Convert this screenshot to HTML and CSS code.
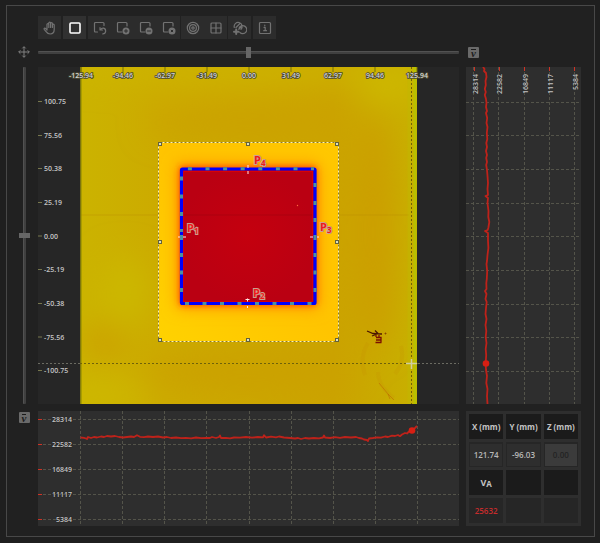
FILE: index.html
```html
<!DOCTYPE html>
<html lang="en">
<head>
<meta charset="utf-8">
<title>Scan viewer</title>
<link rel="stylesheet" href="styles.css">
</head>
<body>
<main class="panel">
  <div class="toolbar" role="toolbar" aria-label="Tools">
    <div class="group single">
      <button class="tool" aria-label="Pan"><svg class="icon" viewBox="0 0 14 14"><path d="M4 9V3.500a.9.9 0 0 1 1.800 0V6.500V2a.9.9 0 0 1 1.800 0v4.500V2.500a.9.9 0 0 1 1.800 0v4V4a.9.9 0 0 1 1.800 0v4.600c0 2.800-1.700 4.400-4 4.400-2.200 0-3.100-.9-4.100-2.400L1.200 8.300c-.5-.9.6-1.600 1.300-.9L4 9"/></svg></button>
    </div>
    <div class="group single">
      <button class="tool active" aria-label="Rectangle"><svg class="icon" viewBox="0 0 14 14"><rect x="2" y="2" width="10" height="10" rx="1"/></svg></button>
    </div>
    <div class="group">
      <button class="tool" aria-label="Reset region"><svg class="icon" viewBox="0 0 14 14"><path d="M4.500 11H2.500q-1 0-1-1V2.500q0-1 1-1H10q1 0 1 1V4.500M7 6.500v2.500h2.500M7.300 8.800Q8.500 7 10.500 7.200a2.900 2.900 0 0 1-.7 5.700"/></svg></button>
      <button class="tool" aria-label="Add region"><svg class="icon" viewBox="0 0 14 14"><path d="M6 11H2.500q-1 0-1-1V2.500q0-1 1-1H10q1 0 1 1V5"/><circle class="disc" cx="10" cy="10" r="3.500"/><path class="cut" d="M8.500 10h3M10 8.500v3"/></svg></button>
      <button class="tool" aria-label="Subtract region"><svg class="icon" viewBox="0 0 14 14"><path d="M6 11H2.500q-1 0-1-1V2.500q0-1 1-1H10q1 0 1 1V5"/><circle class="disc" cx="10" cy="10" r="3.500"/><path class="cut" d="M8.500 10h3"/></svg></button>
      <button class="tool" aria-label="Delete region"><svg class="icon" viewBox="0 0 14 14"><path d="M6 11H2.500q-1 0-1-1V2.500q0-1 1-1H10q1 0 1 1V5"/><circle class="disc" cx="10" cy="10" r="3.500"/><path class="cut" d="M9.200 9.200l1.600 1.600M10.800 9.200l-1.600 1.600"/></svg></button>
    </div>
    <div class="group">
      <button class="tool" aria-label="Target"><svg class="icon" viewBox="0 0 14 14"><circle cx="7" cy="7" r="5.700"/><circle cx="7" cy="7" r="3.400"/><circle cx="7" cy="7" r="1.200"/></svg></button>
      <button class="tool" aria-label="Grid"><svg class="icon" viewBox="0 0 14 14"><rect x="2" y="2" width="10" height="10" rx="1"/><path d="M7 2v10M2 7h10"/></svg></button>
    </div>
    <div class="group single">
      <button class="tool" aria-label="Combine"><svg class="icon" viewBox="0 0 14 14"><path d="M1.300 6.500A4 4 0 1 1 8 8.300M6.800 11.300a4 4 0 1 0-.8-4M3 6.500L6.500 3M5.800 8.300L9 5"/><path class="bold" d="M3.200 8.500v4.500M1 10.700h4.500"/></svg></button>
    </div>
    <div class="group single">
      <button class="tool" aria-label="Information"><svg class="icon" viewBox="0 0 14 14"><rect x="1.500" y="1.500" width="11" height="11" rx="1"/><path d="M6 6.300h1.200v3.200M5.700 9.700h2.800M6.800 4v.7"/></svg></button>
    </div>
  </div>

  <div class="workspace">
    <svg class="move" viewBox="0 0 12 12" aria-hidden="true"><path d="M6 .8v10.400M.8 6h10.400M4.300 2.400L6 .7l1.700 1.700M4.300 9.600L6 11.300l1.700-1.700M2.400 4.300L.7 6l1.700 1.700M9.600 4.300L11.300 6 9.600 7.700"/></svg>
    <input class="slider" type="range" aria-label="Horizontal position" value="50">
    <button class="average side" aria-label="Column average"><span>v</span></button>

    <input class="slider vertical" type="range" aria-label="Vertical position" value="50">

    <svg class="map" viewBox="0 0 421 337" role="img" aria-label="Scan map">
      <defs>
        <linearGradient id="base" x1="0" y1="0" x2="1" y2="0">
          <stop offset="0" stop-color="#cbb300"/><stop offset=".25" stop-color="#ccaa00"/><stop offset=".75" stop-color="#cba300"/><stop offset="1" stop-color="#c8b000"/>
        </linearGradient>
        <radialGradient id="core"><stop offset="0" stop-color="#c4000e"/><stop offset="1" stop-color="#ba0012"/></radialGradient>
        <linearGradient id="warm" x1="0" y1="1" x2="1" y2="0">
          <stop offset="0" stop-color="#ffd200"/><stop offset=".5" stop-color="#ffc400"/><stop offset="1" stop-color="#ffc800"/>
        </linearGradient>
        <filter id="soft" x="-100%" y="-200%" width="300%" height="500%"><feGaussianBlur stdDeviation="16"/></filter>
        <filter id="halo" x="-20%" y="-20%" width="140%" height="140%"><feGaussianBlur stdDeviation="8"/></filter>
        <filter id="edge" x="-20%" y="-20%" width="140%" height="140%"><feGaussianBlur stdDeviation="3"/></filter>
        <clipPath id="scan"><rect x="42.500" width="336.500" height="337"/></clipPath>
        <clipPath id="zone"><rect x="121" y="76" width="180" height="199"/></clipPath>
      </defs>
      <rect class="map-bg" width="421" height="337"/>
      <g clip-path="url(#scan)">
        <rect x="42" width="338" height="337" fill="url(#base)"/>
        <g filter="url(#soft)">
          <ellipse cx="86" cy="225" rx="24" ry="36" fill="#ccb800"/>
          <ellipse cx="65" cy="330" rx="45" ry="12" fill="#cfba00"/>
          <ellipse cx="210" cy="2" rx="190" ry="10" fill="#ceba00"/>
          <ellipse cx="210" cy="305" rx="110" ry="16" fill="#cba000"/>
          <ellipse cx="335" cy="165" rx="20" ry="120" fill="#cc9e00"/>
          <ellipse cx="66" cy="275" rx="22" ry="14" fill="#cc9c00"/>
          <ellipse cx="210" cy="56" rx="100" ry="16" fill="#cba200"/>
          <ellipse cx="351" cy="20" rx="30" ry="18" fill="#ceb800"/>
        </g>
        <path d="M43 148h78M301 148h70" stroke="#b98b00" stroke-opacity=".4"/>
        <path d="M372 0v337" stroke="#c2b800" stroke-width="5" stroke-opacity=".45"/>
        <path d="M377 0v337" stroke="#b8c000" stroke-width="3"/>
        <path d="M43 0v337" stroke="#858600"/>
      </g>
      <g clip-path="url(#zone)">
        <rect x="120" y="75" width="182" height="201" fill="url(#warm)"/>
        <rect x="139" y="97" width="142" height="144" fill="#ff9700" filter="url(#halo)"/>
        <rect x="142" y="100" width="136" height="138" fill="#ff3500" filter="url(#edge)"/>
      </g>
      <rect x="143" y="101" width="134" height="136" fill="url(#core)"/>
      <path d="M146 148h128" stroke="#98000f" stroke-opacity=".45"/>
      <rect x="145.500" y="104.500" width="129" height="130" fill="none" stroke="#e40000" stroke-opacity=".75"/>
      <circle cx="259.500" cy="138.500" r=".7" fill="#ff6a40"/>
      <rect x="143.500" y="102" width="133.500" height="134.500" rx="1" fill="none" stroke="#0000fb" stroke-width="3.200"/>
      <g class="beads">
        <path d="M149.900 101.700h4M167.500 101.700h4M185.100 101.700h4M202.700 101.700h4M220.300 101.700h4M237.900 101.700h4M255.500 101.700h4M273 101.700h3"/>
        <path d="M147 236.500h4M164.500 236.500h4M182 236.500h4M199.500 236.500h4M217 236.500h4M234.500 236.500h4M252 236.500h4M269.500 236.500h4"/>
        <path d="M143.500 109.500v4M143.500 127.500v4M143.500 145v4M143.500 162v3M143.500 168v5M143.500 186v4M143.500 203.500v4M143.500 221v4"/>
        <path d="M277 116v4M277 134v4M277 151v4M277 168v5M277 186v4M277 203.500v4M277 221v4"/>
      </g>
      <path class="cross" d="M210 98v3M210 104v3M209.500 234.500v-3M207.500 232.500h4M209.500 239v2M140 170h2M145 170h3M272 170h3M279 170h2"/>
      <rect class="zone" x="120.500" y="75.500" width="180" height="199"/>
      <rect class="zone light" x="120.500" y="75.500" width="180" height="199"/>
      <g class="handles">
        <rect x="120.500" y="75.500" width="3" height="3"/><rect x="208.500" y="75.500" width="3" height="3"/><rect x="297.500" y="75.500" width="3" height="3"/>
        <rect x="120.500" y="173.500" width="3" height="3"/><rect x="297.500" y="173.500" width="3" height="3"/>
        <rect x="120.500" y="271.500" width="3" height="3"/><rect x="208.500" y="271.500" width="3" height="3"/><rect x="297.500" y="271.500" width="3" height="3"/>
      </g>
      <g class="point">
        <text x="149" y="165">P<tspan class="sub" dy="2">1</tspan></text>
        <text x="215" y="230">P<tspan class="sub" dy="2">2</tspan></text>
        <text x="282" y="164">P<tspan class="sub" dy="2">3</tspan></text>
        <text x="216" y="97">P<tspan class="sub" dy="2">4</tspan></text>
      </g>
      <g fill="none">
        <path d="M329 264l6 2.500 9 .5M334 269l5-2M337 263.500l3 3" stroke="#4b1600" stroke-width="1.300"/>
        <path d="M338 268v2M338 270.500h5v5M338 273h5M337.500 275.500h6M341 268v3" stroke="#7b1000" stroke-width="1.300"/>
        <circle cx="347.500" cy="266.500" r=".5" stroke="#7b3000"/>
        <path d="M330 276q-9 14-3 32M363 279q4 16-6 28M340 305q0 14 16 26" stroke="#c48400" stroke-opacity=".15" stroke-width="4"/>
        <path d="M341 316l9 11 6 6M350 327l2 5" stroke="#ba5a00" stroke-opacity=".45"/>
      </g>
      <path class="cursor dark" d="M42 296.500h338M373.500 0v337"/>
      <path class="cursor" d="M0 296.500h42M380 296.500h41"/>
      <path class="cursor-mark" d="M368 296.500h11M373.500 292v10"/>
      <path class="map-tick top" d="M43 0v5M85 0v5M127 0v5M169 0v5M211 0v5M253 0v5M295 0v5M337 0v5M379 0v5"/>
      <path class="map-tick" d="M0 34.500h4M0 68.500h4M0 101.500h4M0 135.500h4M0 169h4M0 202.500h4M0 236.500h4M0 270h4M0 303.500h4"/>
      <g class="axis middle outlined">
        <text x="43" y="11">-125.94</text><text x="85" y="11">-94.46</text><text x="127" y="11">-62.97</text><text x="169" y="11">-31.49</text><text x="211" y="11">0.00</text><text x="253" y="11">31.49</text><text x="295" y="11">62.97</text><text x="337" y="11">94.46</text><text x="379" y="11">125.94</text>
      </g>
      <g class="axis">
        <text x="6" y="37">100.75</text><text x="6" y="71">75.56</text><text x="6" y="104">50.38</text><text x="6" y="138">25.19</text><text x="6" y="172">0.00</text><text x="6" y="205">-25.19</text><text x="6" y="239">-50.38</text><text x="6" y="273">-75.56</text><text x="6" y="306">-100.75</text>
      </g>
    </svg>

    <svg class="profile" viewBox="0 0 115 337" role="img" aria-label="Vertical profile">
      <path class="grid-line" d="M7.500 0v337M32.500 0v337M58.500 0v337M83.500 0v337M108.500 0v337M0 35.500h115M0 68.500h115M0 102.500h115M0 136.500h115M0 169.500h115M0 203.500h115M0 237.500h115M0 270.500h115M0 304.500h115"/>
      <path class="red-tick" d="M8.500 0v4M33.500 0v4M58.500 0v4M83.500 0v4M108.500 0v4"/>
      <g class="axis end">
        <text transform="translate(12 7) rotate(-90)">28314</text><text transform="translate(36 7) rotate(-90)">22582</text><text transform="translate(62 7) rotate(-90)">16849</text><text transform="translate(87 7) rotate(-90)">11117</text><text transform="translate(112 7) rotate(-90)">5384</text>
      </g>
      <polyline class="trace" points="17,0 18.500,2 18,4 20,6 20.500,10 19.500,14 19.800,18 18.800,22 19.800,25 18.800,28 20,32 20.500,36 20,40 21,44 20,46 21.200,51 20.500,56 21.500,60 20.800,66 21.300,72 20.300,76 21,80 20,84 21,88 20.200,91 21,95 20.200,98 21,103 21.500,109 22,116 21.500,122 22,128 19.500,129 22,131 21.500,136 22.500,144 22.300,150 23.300,155 22.300,161 21.700,163 19,164 22,166 22,174 22.400,181 21.500,188 21,194 20.500,197 21.200,204 20.800,212 20.300,216 20.500,222 19,224 20.500,227 19.500,232 20.700,235 20,241 19.500,247 20.500,252 19.500,258 20.300,264 19.700,270 20.500,276 19.700,282 20.200,288 19.700,296 20,303 21,309 20.300,316 21.500,322 21,329 21.500,337"/>
      <circle class="marker" cx="20" cy="296.500" r="3.300"/>
    </svg>

    <button class="average" aria-label="Row average"><span>v</span></button>

    <svg class="profile" viewBox="0 0 421 115" role="img" aria-label="Horizontal profile">
      <path class="grid-line" d="M42.500 0v115M84.500 0v115M126.500 0v115M168.500 0v115M211.500 0v115M253.500 0v115M295.500 0v115M337.500 0v115M379.500 0v115M0 8.500h421M0 33.500h421M0 58.500h421M0 83.500h421M0 108.500h421"/>
      <path class="red-tick" d="M0 8.500h4M0 33.500h4M0 58.500h4M0 83.500h4M0 108.500h4"/>
      <g class="axis end">
        <text x="34" y="11">28314</text><text x="34" y="36">22582</text><text x="34" y="61">16849</text><text x="34" y="86">11117</text><text x="34" y="111">5384</text>
      </g>
      <polyline class="trace" points="42.500,26.500 46,26.800 48,27.500 49,28 50,26 53,27 56,26 59,26.500 63,25.500 66,26 69,25 73,25.500 77,25 81,26 85,26.500 89,26 93,25.500 96,26 99,24.200 102,25.800 106,26.200 110,25.500 115,26 120,25.500 125,26.500 129,26 133,27 138,26.500 143,27.200 148,26.800 153,27.300 158,26.500 163,27.200 168,26.800 172,27 174,26 178,27 181,26 182,24.500 183,27 188,26.800 192,27.300 196,26.500 202,26.700 208,26 214,26.700 220,26 225,26.300 226,24.200 228,26.500 233,25.700 238,26.300 241,25.500 246,26.500 252,27 257,27.500 260,27 263,28 267,27 271,27.500 276,27 281,27.300 285,26.500 286,24.500 287,26.500 292,27 297,26.200 302,26.800 307,26 313,26.500 318,26 321,27 324,27.500 326,28.500 329,29 330,30 331,27.500 335,27 339,26.300 343,26.700 347,25.500 350,26 354,24.700 357,25 360,24 362,25.200 364,23.500 367,22 369,22.500 371,20.500 374,19 377,17 379,15"/>
      <circle class="marker" cx="374" cy="19.500" r="3.300"/>
    </svg>

    <table class="readout">
      <tr><th><label for="x">X (mm)</label></th><th><label for="y">Y (mm)</label></th><th><label for="z">Z (mm)</label></th></tr>
      <tr><td><input id="x" type="text" value="121.74"></td><td><input id="y" type="text" value="-96.03"></td><td><input id="z" type="text" value="0.00" disabled></td></tr>
      <tr><th class="channel">V<span class="sub">A</span></th><th></th><th></th></tr>
      <tr><td class="value">25632</td><td></td><td></td></tr>
    </table>
  </div>
</main>
</body>
</html>
```
FILE: styles.css
```css
* { box-sizing: border-box; }

body {
  margin: 0;
  background: #1f1f1f;
  color: #c4c4c4;
  font-family: "Noto Sans", "Open Sans", sans-serif;
  font-size: 8px;
}

.panel {
  margin: 5px 5px 6px 6px;
  padding: 10px 13px 10px 10px;
  border: 1px solid #484848;
  background: #212121;
}

button {
  padding: 0;
  border: 0;
  font: inherit;
}

.toolbar {
  display: flex;
  gap: 1px;
  margin: 0 0 5px 21px;
}

.group {
  display: flex;
  background: #2c2c2c;
}

.group.single { margin-right: 1px; }

.tool {
  display: grid;
  place-items: center;
  width: 23px;
  height: 23px;
  background: #2c2c2c;
  color: #727272;
}

.tool.active {
  background: #313131;
  color: #ffffff;
}

.icon {
  width: 14px;
  height: 14px;
  fill: none;
  stroke: currentColor;
  stroke-width: 1.2;
  stroke-linecap: round;
  stroke-linejoin: round;
}

.active .icon { stroke-width: 1.6; }
.icon .disc { fill: currentColor; stroke: none; }
.icon .cut { stroke: #2c2c2c; stroke-width: 1; }
.icon .bold { stroke-width: 2; }

.workspace {
  display: grid;
  grid-template-columns: 14px minmax(0, 421fr) minmax(0, 115fr);
  grid-template-rows: 16px auto auto;
  gap: 7px;
}

.move {
  width: 12px;
  height: 12px;
  place-self: center;
  fill: none;
  stroke: #808080;
}

.slider {
  appearance: none;
  width: 100%;
  height: 16px;
  margin: 0;
  background: transparent;
}

.slider::-webkit-slider-runnable-track {
  height: 3px;
  background: #404040;
  border-top: 1px solid #525252;
  border-radius: 1px;
}

.slider::-webkit-slider-thumb {
  appearance: none;
  width: 5px;
  height: 11px;
  margin-top: -5px;
  background: #666666;
}

.slider.vertical {
  writing-mode: vertical-lr;
  width: 14px;
  height: 100%;
}

.slider.vertical::-webkit-slider-runnable-track {
  width: 3px;
  height: 100%;
  border-top: 0;
  border-left: 1px solid #525252;
}

.slider.vertical::-webkit-slider-thumb {
  width: 11px;
  height: 5px;
  margin: 0 0 0 -5px;
}

.average {
  display: grid;
  place-items: center;
  width: 11px;
  height: 11px;
  margin-top: 1px;
  justify-self: center;
  border-radius: 1px;
  background: #6a6a6a;
  color: #1c1c1c;
  font: italic bold 11px/6px "Liberation Serif", serif;
}

.average span {
  border-top: 1px solid #1c1c1c;
}

.average.side {
  align-self: center;
  justify-self: start;
  margin: 1px 0 0 2px;
}

.map, .profile {
  display: block;
  width: 100%;
  height: auto;
}

.profile { background: #2e2e2e; }
.map-bg { fill: #262626; }

.axis text {
  fill: #c4c4c4;
  stroke: #262626;
  stroke-width: 1;
  paint-order: stroke;
  font-family: "Open Sans", "Noto Sans", sans-serif;
  font-size: 7px;
  font-weight: 600;
}

.axis.middle text { text-anchor: middle; }
.axis.end text { text-anchor: end; }
.axis.outlined text { stroke: #4a4830; stroke-width: 1.6; fill: #d4d4d0; }

.map-tick { stroke: #77774d; }
.map-tick.top { stroke: #77710a; }

.zone { fill: none; stroke: #8b7a28; }
.zone.light { stroke: #fff4b0; stroke-dasharray: 2 2; }
.handles { fill: #dce0c0; stroke: #65633b; stroke-width: 1; }
.beads { fill: none; stroke: #4b91a0; stroke-width: 3; }
.cross { fill: none; stroke: #ffe8e8; }

.point text {
  fill: #f01a1a;
  stroke: #c8a090;
  stroke-width: 2;
  paint-order: stroke;
  font-family: "Open Sans", "Noto Sans", sans-serif;
  font-size: 11px;
  font-weight: 700;
}

.point .sub { font-size: 8px; }

.cursor { stroke: #6b6b62; stroke-dasharray: 2 2; }
.cursor.dark { stroke: #6f6209; }
.cursor-mark { stroke: #cfcfa0; stroke-width: 1.5; }

.grid-line {
  fill: none;
  stroke: #54544a;
  stroke-dasharray: 3 2;
}

.red-tick { stroke: #cf3326; }
.trace { fill: none; stroke: #be221a; stroke-width: 1.8; stroke-linejoin: round; }
.marker { fill: #d81f13; }

.readout {
  width: 100%;
  height: 100%;
  table-layout: fixed;
  border-spacing: 3px;
  background: #2e2e2e;
  font-family: "Open Sans", "Noto Sans", sans-serif;
  font-weight: 600;
}

.readout th, .readout td {
  height: 25px;
  padding: 0;
  text-align: center;
  white-space: nowrap;
}

.readout th { background: #1b1b1b; font-weight: 700; }
.readout .channel { font-size: 9px; }
.readout td { background: #262626; padding: 0 1px; }
.readout .sub { position: relative; top: 1px; font-size: 8px; }
.readout .value { color: #c62c2c; }

.readout input {
  display: block;
  width: 100%;
  height: 22px;
  padding: 0;
  border: 0;
  background: #2e2e2e;
  color: #b8b8b8;
  font: inherit;
  text-align: center;
}

.readout input:disabled { background: #3b3b3b; color: #232323; }
```
